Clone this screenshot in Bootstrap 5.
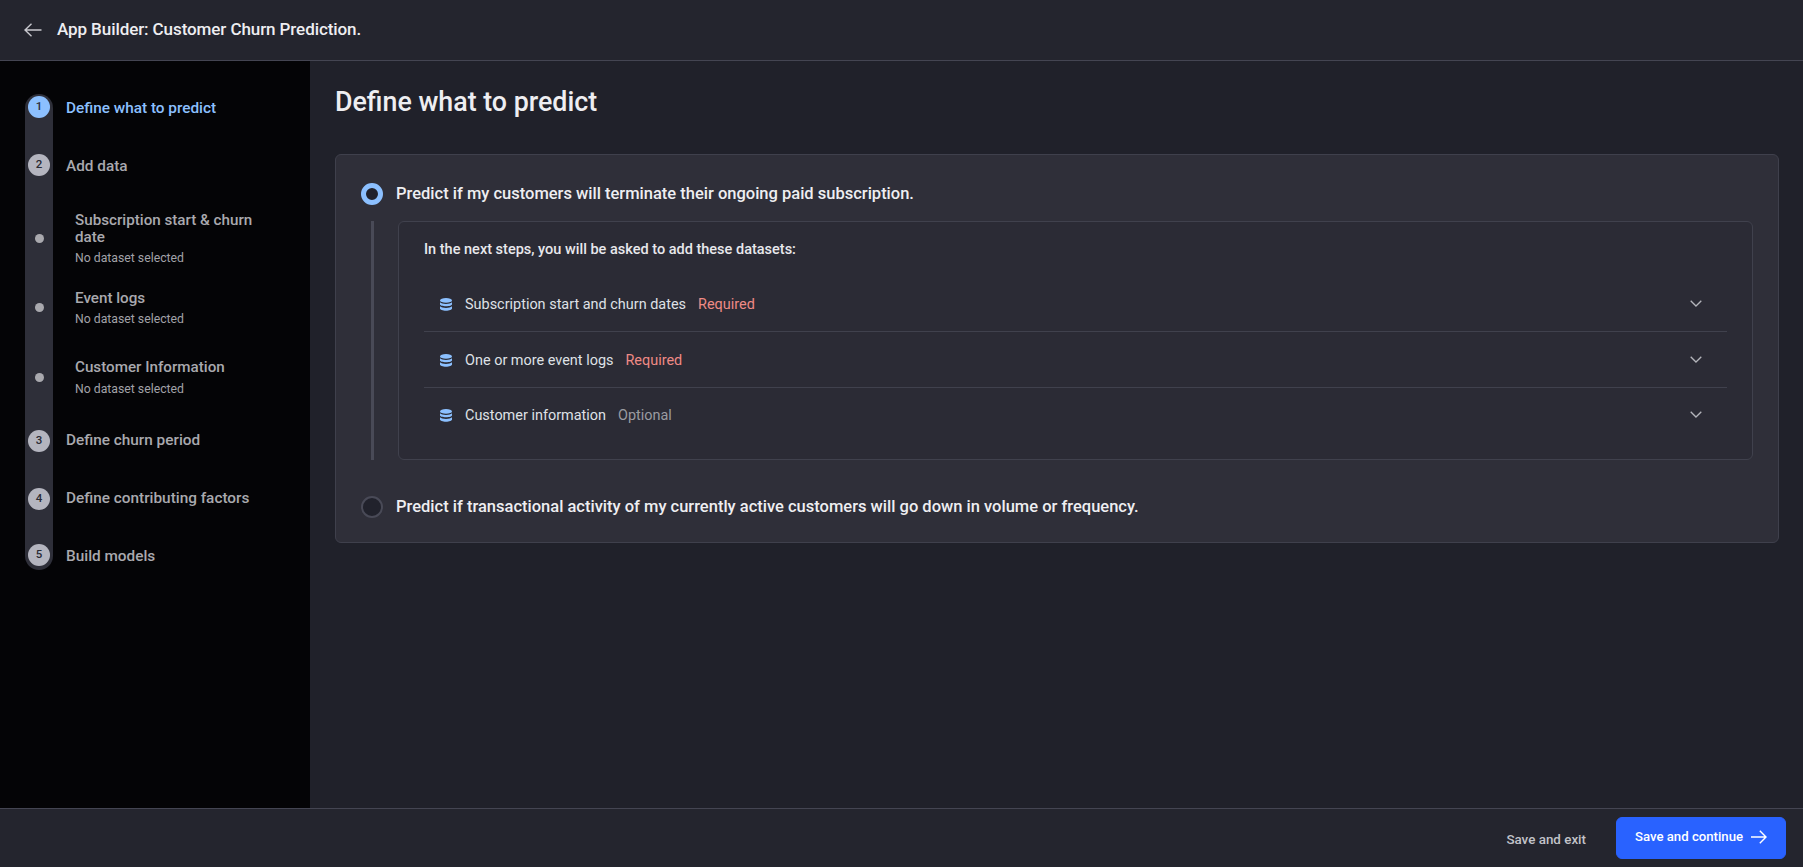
<!DOCTYPE html>
<html lang="en">
<head>
<meta charset="utf-8">
<title>App Builder</title>
<link href="https://cdn.jsdelivr.net/npm/bootstrap@5.3.0/dist/css/bootstrap.min.css" rel="stylesheet">
<style>
html,body{height:100%}
body{background:#20212a;color:#e8e8ec;font-family:Roboto,"Liberation Sans",sans-serif;overflow:hidden}
.app-shell{height:867px}
.top-bar{height:61px;background:#24252e;border-bottom:1px solid #444552;padding:0 24px;gap:15px}
.top-bar .navbar-brand{font-family:Roboto,sans-serif;font-weight:500;font-size:17.050px;letter-spacing:-.1px;color:#eeeef1;margin:0;padding:0}
.side-pane{width:310px;background:#040406;padding:33px 25px 0}
.step-row{display:flex}
.rail-cell{width:28px;flex:none;background:#2e2f39;display:flex;justify-content:center}
.first-step .rail-cell{border-radius:14px 14px 0 0}
.last-step .rail-cell{border-radius:0 0 14px 14px}
.step-num{width:22px;height:22px;border-radius:50%;background:#b4b5bf;color:#2a2b35;font-size:11.5px;font-weight:500;display:flex;align-items:center;justify-content:center}
.step-major{height:58px}
.step-major .rail-cell{padding-top:2px}
.last-step{height:26px}
.step-major.last-step .rail-cell{padding-top:0}
.step-name{font-weight:500;font-size:15.350px;line-height:22px;color:#a9a9ae;padding-left:13px;padding-top:1px}
.step-major.first-step .step-name{padding-top:3px;color:#8cc0ff}
.step-major.first-step .step-num{background:#8cc0ff}
.name-two{padding-top:3px}
.step-sub .rail-cell{align-items:center}
.step-dot{width:9px;height:9px;border-radius:50%;background:#a9a9ae}
.sub-text{padding-left:22px;padding-top:2px;width:218px}
.sub-title{font-weight:500;font-size:15.200px;line-height:17px;color:#a9a9ae}
.sub-note{font-size:12.250px;line-height:14px;margin-top:5px;color:#a2a2a8}
.gap-note{margin-top:6px}
.dot-tall{padding-bottom:22px}
.dot-taller{padding-bottom:31px}
.sub-one{height:78px}
.sub-two{height:69px}
.sub-three{height:71px}
.main-pane{padding:0 24px 0 25px;min-width:0}
.page-title{font-family:Roboto,sans-serif;font-weight:500;font-size:26.800px;line-height:32px;color:#eeeef1;margin:25px 0 36px}
.choice-card{background:#2f2f39;border:1px solid #3f404c;border-radius:6px;--bs-card-bg:#2f2f39;height:389px;padding:27px 25px 0}
.choice-row{display:flex;align-items:center;gap:13px;margin:0;padding:0;min-height:24px}
.choice-row .form-check-input{width:22px;height:22px;margin:0;flex:none;background-image:none!important;background-color:#21222c;border:2px solid #494a57}
.choice-row .form-check-input:checked{border:5px solid #8cc0ff;background-color:#21222c}
.choice-text{font-size:16.500px;font-weight:500;color:#eeeef1}
.second-choice{margin-top:35px}
.detail-wrap{margin:14px 0 0 10px;border-left:3px solid #494a57;padding-left:24px;height:239px}
.detail-box{background:#2b2b35;border:1px solid #40414d;border-radius:6px;height:100%;padding:19px 25px 0}
.detail-head{font-size:14.500px;font-weight:500;color:#e8e8ec;margin-bottom:18px;line-height:17px}
.data-list{--bs-list-group-bg:transparent;--bs-list-group-border-color:#40414d}
.data-list .list-group-item{display:flex;align-items:center;height:56px;padding:3px 25px 0 16px;font-size:14.450px;color:#dfe1e6;gap:13px}
.data-list .list-group-item:last-child{padding-top:0}
.data-list .name-tag{margin-right:-1px}
.req-tag{color:#ef8a85}
.opt-tag{color:#9a9ba1}
.row-chevron{margin-bottom:2px}
.foot-bar{height:59px;background:#24252e;border-top:1px solid #444552;padding:0 17px 0 0}
.foot-bar .btn{font-family:Roboto,sans-serif;font-weight:500}
.exit-btn{color:#c2c3c9;font-size:13.400px;margin-right:17px;margin-top:4px}
.go-btn{--bs-btn-bg:#2962ff;--bs-btn-border-color:#2962ff;font-size:13.200px;width:170px;height:42px;display:flex;align-items:center;justify-content:center;gap:8px;color:#fff;border-radius:6px;padding-bottom:8px}
</style>
</head>
<body>
<div class="app-shell d-flex flex-column">
  <nav class="navbar top-bar flex-nowrap justify-content-start">
    <svg width="18" height="14" viewBox="0 0 18 14" fill="none" stroke="#c9c9cf" stroke-width="1.4"><path d="M17.5 7H1M7.5 .8 1 7l6.500 6.200"/></svg>
    <span class="navbar-brand">App Builder: Customer Churn Prediction.</span>
  </nav>
  <div class="d-flex flex-grow-1" style="min-height:0">
    <aside class="side-pane flex-none">
      <div class="step-row step-major first-step"><div class="rail-cell"><div class="step-num">1</div></div><div class="step-name">Define what to predict</div></div>
      <div class="step-row step-major"><div class="rail-cell"><div class="step-num">2</div></div><div class="step-name name-two">Add data</div></div>
      <div class="step-row step-sub sub-one"><div class="rail-cell dot-tall"><div class="step-dot"></div></div><div class="sub-text"><div class="sub-title">Subscription start &amp; churn date</div><div class="sub-note">No dataset selected</div></div></div>
      <div class="step-row step-sub sub-two"><div class="rail-cell dot-taller"><div class="step-dot"></div></div><div class="sub-text"><div class="sub-title">Event logs</div><div class="sub-note">No dataset selected</div></div></div>
      <div class="step-row step-sub sub-three"><div class="rail-cell dot-taller"><div class="step-dot"></div></div><div class="sub-text"><div class="sub-title">Customer Information</div><div class="sub-note gap-note">No dataset selected</div></div></div>
      <div class="step-row step-major"><div class="rail-cell"><div class="step-num">3</div></div><div class="step-name">Define churn period</div></div>
      <div class="step-row step-major"><div class="rail-cell"><div class="step-num">4</div></div><div class="step-name">Define contributing factors</div></div>
      <div class="step-row step-major last-step"><div class="rail-cell"><div class="step-num">5</div></div><div class="step-name">Build models</div></div>
    </aside>
    <main class="main-pane flex-grow-1">
      <h1 class="page-title">Define what to predict</h1>
      <div class="card choice-card">
        <label class="form-check choice-row"><input class="form-check-input" type="radio" name="goal" checked><span class="choice-text">Predict if my customers will terminate their ongoing paid subscription.</span></label>
        <div class="detail-wrap">
          <div class="detail-box">
            <div class="detail-head">In the next steps, you will be asked to add these datasets:</div>
            <ul class="list-group list-group-flush data-list">
              <li class="list-group-item"><svg width="12" height="13" viewBox="0 0 12 13" fill="#8cc0ff"><ellipse cx="6" cy="2.400" rx="6" ry="2.400"/><path d="M0 4.300c1.200 1.100 3.400 1.600 6 1.600s4.800-.5 6-1.600v2c0 1.200-2.700 2-6 2s-6-.8-6-2zM0 8.300c1.200 1.100 3.400 1.600 6 1.600s4.800-.5 6-1.600v2.200C12 11.700 9.300 12.700 6 12.700s-6-1-6-2.200z"/></svg><span class="name-tag">Subscription start and churn dates</span><span class="req-tag">Required</span><svg class="ms-auto row-chevron" width="12" height="7" viewBox="0 0 12 7" fill="none" stroke="#b4b5bb" stroke-width="1.300"><path d="M.7.700 6 6l5.300-5.300"/></svg></li>
              <li class="list-group-item"><svg width="12" height="13" viewBox="0 0 12 13" fill="#8cc0ff"><ellipse cx="6" cy="2.400" rx="6" ry="2.400"/><path d="M0 4.300c1.200 1.100 3.400 1.600 6 1.600s4.800-.5 6-1.600v2c0 1.200-2.700 2-6 2s-6-.8-6-2zM0 8.300c1.200 1.100 3.400 1.600 6 1.600s4.800-.5 6-1.600v2.200C12 11.700 9.300 12.700 6 12.700s-6-1-6-2.200z"/></svg><span class="name-tag">One or more event logs</span><span class="req-tag">Required</span><svg class="ms-auto row-chevron" width="12" height="7" viewBox="0 0 12 7" fill="none" stroke="#b4b5bb" stroke-width="1.300"><path d="M.7.700 6 6l5.300-5.300"/></svg></li>
              <li class="list-group-item"><svg width="12" height="13" viewBox="0 0 12 13" fill="#8cc0ff"><ellipse cx="6" cy="2.400" rx="6" ry="2.400"/><path d="M0 4.300c1.200 1.100 3.400 1.600 6 1.600s4.800-.5 6-1.600v2c0 1.200-2.700 2-6 2s-6-.8-6-2zM0 8.300c1.200 1.100 3.400 1.600 6 1.600s4.800-.5 6-1.600v2.200C12 11.700 9.300 12.700 6 12.700s-6-1-6-2.200z"/></svg><span class="name-tag">Customer information</span><span class="opt-tag">Optional</span><svg class="ms-auto row-chevron" width="12" height="7" viewBox="0 0 12 7" fill="none" stroke="#b4b5bb" stroke-width="1.300"><path d="M.7.700 6 6l5.300-5.300"/></svg></li>
            </ul>
          </div>
        </div>
        <label class="form-check choice-row second-choice"><input class="form-check-input" type="radio" name="goal"><span class="choice-text">Predict if transactional activity of my currently active customers will go down in volume or frequency.</span></label>
      </div>
    </main>
  </div>
  <footer class="foot-bar d-flex align-items-center justify-content-end">
    <button class="btn exit-btn" type="button">Save and exit</button>
    <button class="btn btn-primary go-btn" type="button">Save and continue<svg width="16" height="14" viewBox="0 0 16 14" fill="none" stroke="#fff" stroke-width="1.400"><path d="M0 7h15M8.800.8 15 7l-6.200 6.200"/></svg></button>
  </footer>
</div>
</body>
</html>
